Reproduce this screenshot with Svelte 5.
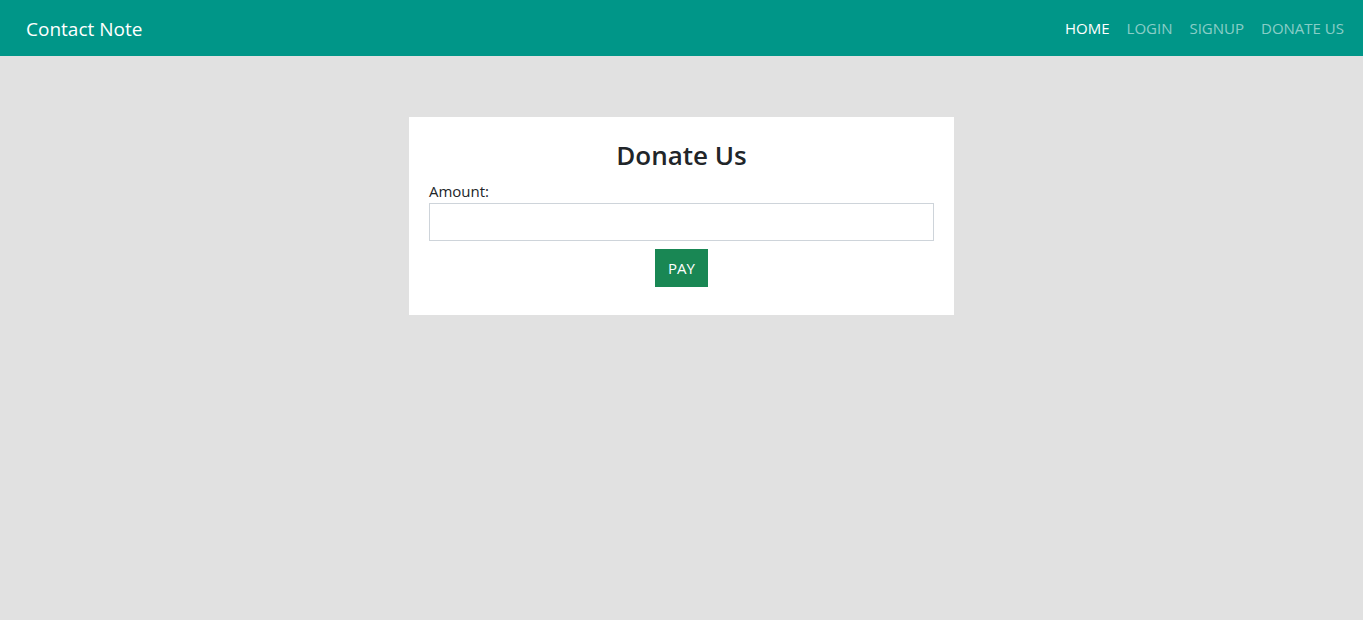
<script>
  let amount = $state('');
  const links = [
    { label: 'HOME', active: true },
    { label: 'LOGIN' },
    { label: 'SIGNUP' },
    { label: 'DONATE US' }
  ];
</script>

<header class="navbar">
  <a class="brand" href="#home">Contact Note</a>
  <nav>
    {#each links as link}
      <a class="link" class:active={link.active} href="#{link.label.toLowerCase().replace(' ', '-')}">{link.label}</a>
    {/each}
  </nav>
</header>

<main>
  <form class="card" onsubmit={(e) => e.preventDefault()}>
    <h1>Donate Us</h1>
    <label for="amount">Amount:</label>
    <input id="amount" type="text" bind:value={amount} />
    <button type="submit">PAY</button>
  </form>
</main>

<style>
  :global(body) {
    margin: 0;
    background: #e1e1e1;
    color: #212529;
    font: 15px/24px "Open Sans", "Noto Sans", sans-serif;
  }
  .navbar {
    display: flex;
    box-sizing: border-box;
    align-items: flex-start;
    justify-content: space-between;
    min-height: 56px;
    padding: 14px 19px 12px 26px;
    background: #009688;
  }
  a {
    text-decoration: none;
  }
  .brand {
    color: #fff;
    font-size: 19px;
    line-height: 30px;
  }
  nav {
    display: flex;
    flex-wrap: wrap;
    gap: 17px;
    line-height: 28px;
  }
  .link {
    color: rgba(255, 255, 255, 0.55);
  }
  .link.active {
    color: #fff;
  }
  main {
    padding: 61px 0 0;
  }
  .card {
    display: flex;
    flex-direction: column;
    box-sizing: border-box;
    width: 40%;
    min-width: 280px;
    margin: 0 auto;
    padding: 21px 20px 28px;
    background: #fff;
  }
  h1 {
    margin: 0 0 7px;
    font-size: 26px;
    line-height: 34px;
    font-weight: 600;
    text-align: center;
  }
  input {
    box-sizing: border-box;
    width: 100%;
    height: 38px;
    padding: 6px 12px;
    border: 1px solid #ced4da;
    border-radius: 0;
    background: #fff;
    color: inherit;
    font: inherit;
  }
  button {
    align-self: center;
    margin-top: 8px;
    padding: 6px 12px;
    border: 1px solid #198754;
    border-radius: 0;
    background: #198754;
    color: #fff;
    font: inherit;
    cursor: pointer;
  }
</style>
